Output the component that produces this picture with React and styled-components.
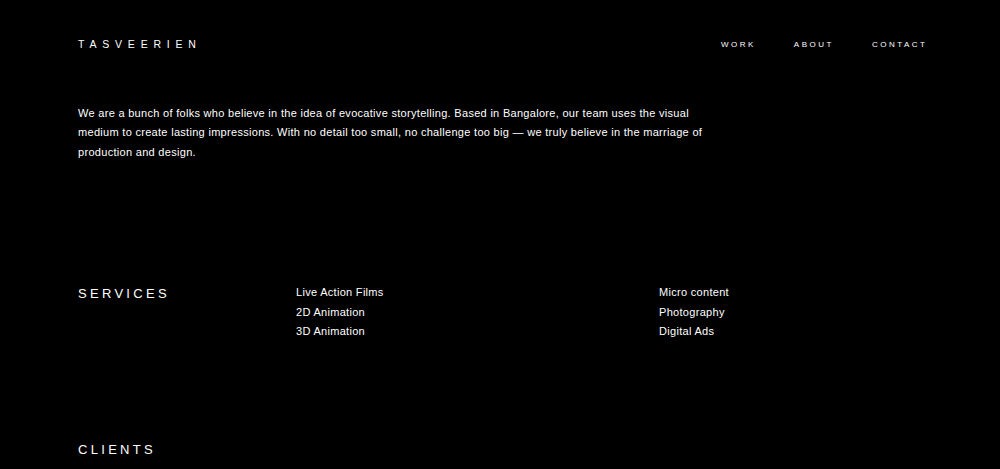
import React from "react";
import styled, { createGlobalStyle } from "styled-components";

const Global = createGlobalStyle`
  html, body { margin: 0; padding: 0; background: #000; }
  body { font-family: "Liberation Sans", Arial, sans-serif; color: #fff; }
`;

const Page = styled.div`
  padding: 0 72.5px 0 78px;
  min-height: 469px;
  box-sizing: border-box;
`;

const Header = styled.header`
  height: 88px;
  display: flex;
  align-items: center;
  justify-content: space-between;
`;

const Logo = styled.div`
  font-size: 10.5px;
  letter-spacing: 5.8px;
  font-weight: 400;
`;

const Nav = styled.nav`
  display: flex;
  gap: 38px;
`;

const NavLink = styled.a`
  font-size: 8px;
  letter-spacing: 2.5px;
  color: #fff;
  text-decoration: none;
`;

const Intro = styled.p`
  margin: 15.5px 0 0;
  max-width: 636px;
  font-size: 11px;
  letter-spacing: 0.3px;
  line-height: 19.5px;
`;

const Section = styled.section`
  display: grid;
  grid-template-columns: 218px 363px 1fr;
  margin-top: ${(p) => p.$top}px;
`;

const Heading = styled.h2`
  margin: -1px 0 0;
  font-size: 13px;
  font-weight: 400;
  line-height: 19.5px;
  letter-spacing: 3.3px;
`;

const List = styled.ul`
  margin: -1.5px 0 0;
  padding: 0;
  list-style: none;
`;

const Item = styled.li`
  font-size: 11px;
  letter-spacing: 0.3px;
  line-height: 19.5px;
`;

export default function App() {
  return (
    <Page>
      <Global />
      <Header>
        <Logo>TASVEERIEN</Logo>
        <Nav>
          <NavLink href="#">WORK</NavLink>
          <NavLink href="#">ABOUT</NavLink>
          <NavLink href="#">CONTACT</NavLink>
        </Nav>
      </Header>
      <Intro>
        We are a bunch of folks who believe in the idea of evocative storytelling. Based in Bangalore, our team uses the visual medium to create lasting impressions. With no detail too small, no challenge too big — we truly believe in the marriage of production and design.
      </Intro>
      <Section $top={122.5}>
        <Heading>SERVICES</Heading>
        <List>
          <Item>Live Action Films</Item>
          <Item>2D Animation</Item>
          <Item>3D Animation</Item>
        </List>
        <List>
          <Item>Micro content</Item>
          <Item>Photography</Item>
          <Item>Digital Ads</Item>
        </List>
      </Section>
      <Section $top={99}>
        <Heading>CLIENTS</Heading>
      </Section>
    </Page>
  );
}
